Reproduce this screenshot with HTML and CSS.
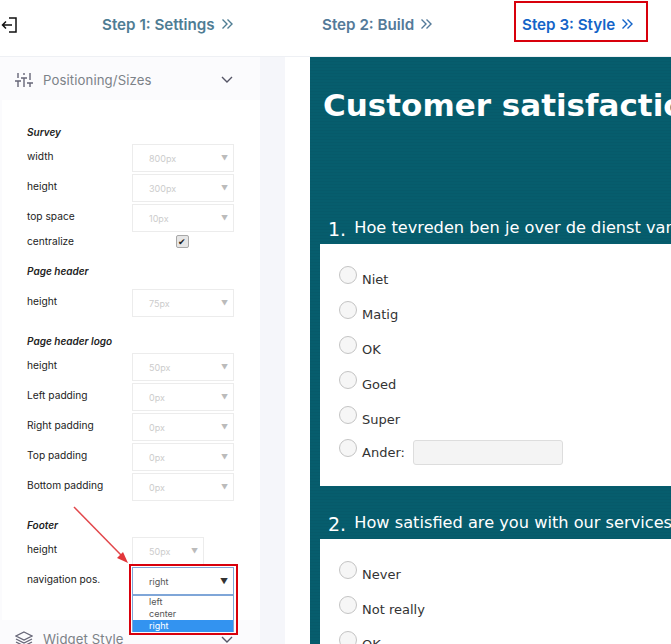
FILE: index.html
```html
<!DOCTYPE html>
<html lang="en">
<head>
    <meta charset="UTF-8">
    <title>Survey style</title>
    <link rel="stylesheet" href="styles.css">
</head>
<body>
    <header class="topbar">
        <svg class="exit-icon" width="16" height="16" viewBox="0 0 16 16" fill="none" stroke="#111" stroke-width="1.5">
            <path d="M8 1h7v14H8M11 8H1.5M5 4.5L1.5 8L5 11.5"/>
        </svg>
        <a class="step step-1">Step 1: Settings
            <svg width="12" height="12" viewBox="0 0 12 12" fill="none" stroke="currentColor" stroke-width="1.4"><path d="M1.5 1.5L6 6L1.5 10.5M6.5 1.5L11 6L6.5 10.5"/></svg>
        </a>
        <a class="step step-2">Step 2: Build
            <svg width="12" height="12" viewBox="0 0 12 12" fill="none" stroke="currentColor" stroke-width="1.4"><path d="M1.5 1.5L6 6L1.5 10.5M6.5 1.5L11 6L6.5 10.5"/></svg>
        </a>
        <a class="step step-3 active">Step 3: Style
            <svg width="12" height="12" viewBox="0 0 12 12" fill="none" stroke="currentColor" stroke-width="1.4"><path d="M1.5 1.5L6 6L1.5 10.5M6.5 1.5L11 6L6.5 10.5"/></svg>
        </a>
    </header>

    <div class="main">
        <aside class="sidebar">
            <div class="panel-head">
                <svg width="18" height="16" viewBox="0 0 18 16" fill="none" stroke="#667" stroke-width="1.4">
                    <path d="M3 1v5M3 9v6M0 9h6M9 1v2M9 6v9M6 6h6M15 1v7M15 11v4M12 11h6"/>
                </svg>
                <span>Positioning/Sizes</span>
                <svg class="chevron" width="12" height="7" viewBox="0 0 12 7" fill="none" stroke="#556" stroke-width="1.4"><path d="M1 1l5 5l5-5"/></svg>
            </div>

            <div class="panel-body">
                <div class="group-title">Survey</div>
                <div class="row"><label>width</label><div class="fake-select"><span>800px</span><i>▼</i></div></div>
                <div class="row"><label>height</label><div class="fake-select"><span>300px</span><i>▼</i></div></div>
                <div class="row"><label>top space</label><div class="fake-select"><span>10px</span><i>▼</i></div></div>
                <div class="row row-check"><label>centralize</label><div class="check-cell"><span class="checkbox">✔</span></div></div>

                <div class="group-title title-header">Page header</div>
                <div class="row"><label>height</label><div class="fake-select"><span>75px</span><i>▼</i></div></div>

                <div class="group-title title-logo">Page header logo</div>
                <div class="row"><label>height</label><div class="fake-select"><span>50px</span><i>▼</i></div></div>
                <div class="row"><label>Left padding</label><div class="fake-select"><span>0px</span><i>▼</i></div></div>
                <div class="row"><label>Right padding</label><div class="fake-select"><span>0px</span><i>▼</i></div></div>
                <div class="row"><label>Top padding</label><div class="fake-select"><span>0px</span><i>▼</i></div></div>
                <div class="row"><label>Bottom padding</label><div class="fake-select"><span>0px</span><i>▼</i></div></div>

                <div class="group-title title-footer">Footer</div>
                <div class="row"><label>height</label><div class="fake-select small"><span>50px</span><i>▼</i></div></div>
                <div class="row">
                    <label>navigation pos.</label>
                    <div class="select-wrap">
                        <div class="fake-select open"><span>right</span><i>▼</i></div>
                        <ul class="options">
                            <li>left</li>
                            <li>center</li>
                            <li class="selected">right</li>
                        </ul>
                    </div>
                </div>
            </div>

            <div class="panel-head second">
                <svg width="18" height="16" viewBox="0 0 18 16" fill="none" stroke="#667" stroke-width="1.3">
                    <path d="M9 1l8 4l-8 4l-8-4zM1 8l8 4l8-4M1 11l8 4l8-4"/>
                </svg>
                <span>Widget Style</span>
                <svg class="chevron" width="12" height="7" viewBox="0 0 12 7" fill="none" stroke="#556" stroke-width="1.4"><path d="M1 1l5 5l5-5"/></svg>
            </div>
        </aside>

        <div class="gutter"></div>

        <section class="survey">
            <h1>Customer satisfaction</h1>

            <h2 class="question first"><b>1.</b> Hoe tevreden ben je over de dienst van ons bedrijf?</h2>
            <div class="answers">
                <div class="answer"><span class="radio"></span><span>Niet</span></div>
                <div class="answer"><span class="radio"></span><span>Matig</span></div>
                <div class="answer"><span class="radio"></span><span>OK</span></div>
                <div class="answer"><span class="radio"></span><span>Goed</span></div>
                <div class="answer"><span class="radio"></span><span>Super</span></div>
                <div class="answer other"><span class="radio"></span><span>Ander:</span><span class="text-field"></span></div>
            </div>

            <h2 class="question"><b>2.</b> How satisfied are you with our services?</h2>
            <div class="answers">
                <div class="answer"><span class="radio"></span><span>Never</span></div>
                <div class="answer"><span class="radio"></span><span>Not really</span></div>
                <div class="answer"><span class="radio"></span><span>OK</span></div>
            </div>
        </section>
    </div>

    <!-- annotations drawn on top of the screenshot -->
    <div class="mark mark-step"></div>
    <div class="mark mark-select"></div>
    <svg class="arrow" width="60" height="62" viewBox="0 0 60 62">
        <path d="M1 1L49 50" stroke="#e2474b" stroke-width="1.5" fill="none"/>
        <path d="M55 57L44 52L50 46z" fill="#e2373b"/>
    </svg>
</body>
</html>
```

FILE: styles.css
```css
html, body {
    margin: 0;
    padding: 0;
    height: 644px;
    overflow: hidden;
    background-color: white;
    font-family: Inter, Roboto, sans-serif;
}
.topbar {
    height: 48px;
    padding-bottom: 8px;
    display: flex;
    align-items: center;
    border-bottom: 1px solid #eef0f4;
}
.exit-icon {
    margin-left: 1px;
    margin-top: 2px;
}
.step {
    display: flex;
    align-items: center;
    gap: 6px;
    font-size: 15.2px;
    font-weight: 600;
    color: #4f7d94;
    white-space: nowrap;
}
.step-1 { margin-left: 85px; width: 220px; }
.step-2 { color: #547a99; width: 200px; }
.step-3 { color: #1464c8; }

.main {
    display: flex;
    height: 587px;
}
.sidebar {
    width: 260px;
    flex-shrink: 0;
    display: flex;
    flex-direction: column;
    background-color: #fbfbfd;
}
.panel-head {
    height: 43px;
    flex-shrink: 0;
    box-sizing: border-box;
    display: flex;
    align-items: center;
    padding: 2px 27px 0 15px;
    color: #7c8288;
    font-size: 13.2px;
    letter-spacing: 0.1px;
}
.panel-head span {
    margin-left: 10px;
}
.chevron {
    margin-left: auto;
}
.panel-body {
    height: 520px;
    flex-shrink: 0;
    box-sizing: border-box;
    padding: 26px 26px 0 25px;
    margin-left: 2px;
    background-color: white;
    font-size: 10.2px;
    color: #222;
}
.panel-head.second {
    height: 38px;
    padding-top: 0;
}
.group-title {
    font-style: italic;
    font-weight: 600;
    font-size: 10px;
    color: #222;
    height: 12px;
    line-height: 12px;
    margin-bottom: 6px;
}
.title-header { margin-top: 17px; margin-bottom: 12px; }
.title-logo { margin-top: 18px; }
.title-footer { margin-top: 18px; }
.row {
    display: flex;
    height: 28px;
    margin-bottom: 2px;
}
.row label {
    width: 105px;
    padding-top: 6px;
}
.row-check {
    height: 14px;
    margin-top: 0;
    align-items: center;
}
.row-check label {
    padding-top: 0;
}
.check-cell {
    width: 100px;
    display: flex;
    justify-content: center;
}
.checkbox {
    width: 11px;
    height: 11px;
    border: 1px solid #a8a8a8;
    border-radius: 2px;
    background-color: #e6e6e6;
    color: #222;
    font-size: 9px;
    line-height: 11px;
    text-align: center;
}
.fake-select {
    width: 102px;
    height: 28px;
    box-sizing: border-box;
    border: 1px solid #ececec;
    display: flex;
    align-items: center;
    padding: 0 5px 0 16px;
    color: #ccc;
    font-size: 9px;
}
.fake-select i {
    margin-left: auto;
    font-style: normal;
    font-size: 7px;
    color: #bbb;
}
.fake-select.small {
    width: 72px;
}
.fake-select.open {
    border-color: #7fa6d8;
    color: #555;
}
.fake-select.open i {
    color: #333;
    font-size: 8px;
}
.select-wrap {
    position: relative;
    width: 102px;
}
.options {
    position: absolute;
    left: 0;
    top: 28px;
    width: 102px;
    box-sizing: border-box;
    margin: 0;
    padding: 0;
    list-style: none;
    border: 1px solid #7fa6d8;
    border-bottom: none;
    background-color: white;
    font-size: 9px;
    color: #555;
}
.options li {
    height: 12px;
    line-height: 12px;
    padding-left: 16px;
}
.options li.selected {
    background-color: #3393f0;
    color: white;
}

.gutter {
    width: 25px;
    flex-shrink: 0;
    background-color: #f5f6fa;
    margin-right: 25px;
}
.survey {
    flex-grow: 1;
    min-width: 0;
    background-color: #065d6d;
    background-image: repeating-linear-gradient(0deg, rgba(0,0,0,0.03) 0 1px, transparent 1px 3px);
    color: white;
    padding-left: 10px;
    font-family: "DejaVu Sans", Verdana, sans-serif;
    white-space: nowrap;
    overflow: hidden;
}
h1 {
    margin: 0;
    padding: 26px 0 0 3px;
    height: 134px;
    font-size: 31px;
    line-height: 44px;
    font-weight: bold;
}
.question {
    margin: 26px 0 0;
    font-size: 16.2px;
    font-weight: normal;
    line-height: 22px;
    height: 22px;
    padding: 0 0 5px 8px;
}
.question b {
    font-size: 19px;
    font-weight: normal;
    vertical-align: -3px;
    margin-right: 3px;
}
.question.first {
    margin-top: 0;
}
.answers {
    background-color: white;
    color: #333;
    font-size: 13px;
    padding: 19px 0 0 19px;
    height: 223px;
}
.answer {
    display: flex;
    height: 35px;
    gap: 5px;
}
.answer span:nth-child(2) {
    padding-top: 9px;
}
.radio {
    width: 18px;
    height: 18px;
    box-sizing: border-box;
    border: 1px solid #c4c4c4;
    border-radius: 50%;
    background-color: #f6f6f6;
    margin-top: 3px;
}
.answer.other {
    height: 30px;
    margin-top: -2px;
}
.text-field {
    width: 150px;
    height: 25px;
    box-sizing: border-box;
    border: 1px solid #ddd;
    border-radius: 3px;
    background-color: #f4f4f4;
    margin: 4px 0 0 3px;
}

.mark {
    position: absolute;
    box-sizing: border-box;
    border: 2px solid #d8000c;
}
.mark-step {
    left: 514px;
    top: 1px;
    width: 134px;
    height: 41px;
}
.mark-select {
    left: 129px;
    top: 564px;
    width: 109px;
    height: 71px;
}
.arrow {
    position: absolute;
    left: 73px;
    top: 506px;
}
```
